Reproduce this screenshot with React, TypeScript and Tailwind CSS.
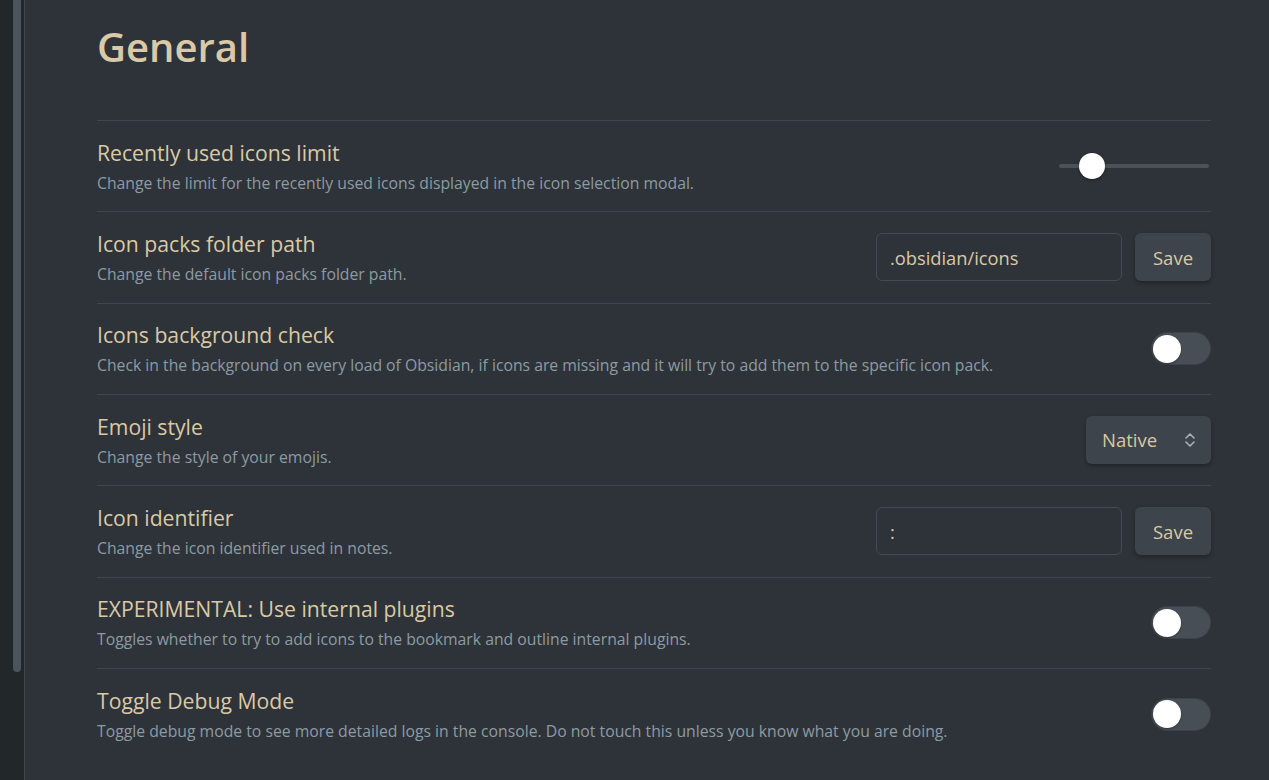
import React from "react";

function Toggle() {
  return (
    <div className="relative h-[33px] w-[60px] shrink-0 rounded-full bg-[#474e55] shadow-[inset_0_0_0_1px_rgba(0,0,0,0.15)]">
      <div className="absolute left-[2px] top-[2.5px] h-[28px] w-[28px] rounded-full bg-white shadow-[0_1px_2px_rgba(0,0,0,0.3)]" />
    </div>
  );
}

function TextSave({ value }: { value: string }) {
  return (
    <div className="flex items-center gap-[13px]">
      <div className="flex h-[48px] w-[246px] items-center rounded-[6px] border border-[#434a51] bg-[#2e3339] px-[13px] text-[18.3px] text-[#dac9a6]">
        {value}
      </div>
      <button className="h-[48px] w-[76px] rounded-[6px] bg-[#3d444b] text-[18.5px] text-[#dac9a6] shadow-[0_2px_4px_rgba(0,0,0,0.3)]">
        Save
      </button>
    </div>
  );
}

function Row({
  name,
  desc,
  control,
}: {
  name: string;
  desc: string;
  control: React.ReactNode;
}) {
  return (
    <div className="flex h-[91.33px] items-center justify-between border-t border-[#40464d]">
      <div className="flex flex-col">
        <div className="text-[21.2px] leading-[26px] text-[#dac9a6]">{name}</div>
        <div className="mt-[7px] text-[15.75px] leading-[20px] text-[#8c9ba3]">{desc}</div>
      </div>
      {control}
    </div>
  );
}

export default function App() {
  return (
    <div
      className="flex h-[780px] w-[1269px] overflow-hidden bg-[#2e3339]"
      style={{ fontFamily: '"Open Sans", "Noto Sans", sans-serif' }}
    >
      <div className="relative w-[25px] shrink-0 border-r border-[#40464c] bg-[#22272a]">
        <div className="absolute left-[13px] top-0 h-[672px] w-[8px] rounded-b-full bg-[#4b545c]" />
      </div>
      <div className="flex-1 pl-[72px] pr-[58px]">
        <h1 className="mt-[20px] h-[100px] text-[40px] font-semibold leading-[54px] text-[#dac9a6]">
          General
        </h1>
        <Row
          name="Recently used icons limit"
          desc="Change the limit for the recently used icons displayed in the icon selection modal."
          control={
            <div className="relative mr-[2px] h-[26px] w-[150px]">
              <div className="absolute left-0 right-0 top-[11px] h-[4px] rounded-full bg-[#4a5259]" />
              <div className="absolute left-[20px] top-0 h-[26px] w-[26px] rounded-full bg-white shadow-[0_1px_3px_rgba(0,0,0,0.4)]" />
            </div>
          }
        />
        <Row
          name="Icon packs folder path"
          desc="Change the default icon packs folder path."
          control={<TextSave value=".obsidian/icons" />}
        />
        <Row
          name="Icons background check"
          desc="Check in the background on every load of Obsidian, if icons are missing and it will try to add them to the specific icon pack."
          control={<Toggle />}
        />
        <Row
          name="Emoji style"
          desc="Change the style of your emojis."
          control={
            <div className="flex h-[48px] w-[125px] items-center justify-between rounded-[6px] bg-[#3d444b] pl-[16px] pr-[14px] text-[18.5px] text-[#dac9a6] shadow-[0_2px_4px_rgba(0,0,0,0.3)]">
              <span>Native</span>
              <svg width="14" height="18" viewBox="0 0 14 18" fill="none" stroke="#aab3ba" strokeWidth="1.6" strokeLinecap="round" strokeLinejoin="round">
                <path d="M3 7l4-4 4 4" />
                <path d="M3 11l4 4 4-4" />
              </svg>
            </div>
          }
        />
        <Row
          name="Icon identifier"
          desc="Change the icon identifier used in notes."
          control={<TextSave value=":" />}
        />
        <Row
          name="EXPERIMENTAL: Use internal plugins"
          desc="Toggles whether to try to add icons to the bookmark and outline internal plugins."
          control={<Toggle />}
        />
        <Row
          name="Toggle Debug Mode"
          desc="Toggle debug mode to see more detailed logs in the console. Do not touch this unless you know what you are doing."
          control={<Toggle />}
        />
      </div>
    </div>
  );
}
